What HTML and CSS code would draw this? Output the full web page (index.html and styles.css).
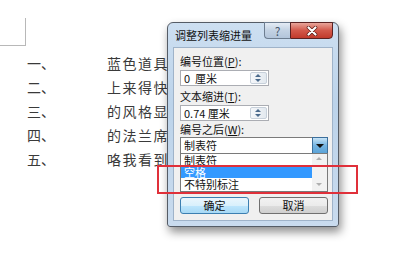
FILE: index.html
```html
<!DOCTYPE html>
<html lang="zh-CN">
<head>
    <meta charset="UTF-8">
    <title>调整列表缩进量</title>
    <link rel="stylesheet" href="styles.css">
</head>
<body>
    <div class="page">
        <div class="corner"></div>
        <div class="doc">
            <div class="row"><span class="num">一、</span><span class="txt">蓝色道具</span></div>
            <div class="row"><span class="num">二、</span><span class="txt">上来得快</span></div>
            <div class="row"><span class="num">三、</span><span class="txt">的风格显</span></div>
            <div class="row"><span class="num">四、</span><span class="txt">的法兰席</span></div>
            <div class="row"><span class="num">五、</span><span class="txt">咯我看到</span></div>
        </div>

        <div class="dialog">
            <div class="titlebar">
                <span class="title">调整列表缩进量</span>
                <div class="caption">
                    <span class="btn-help">?</span>
                    <span class="btn-close">
                        <svg width="14" height="10" viewBox="0 0 14 10">
                            <path d="M3.5 1.5 L10.5 8.5 M10.5 1.5 L3.5 8.5" stroke="#5a1a14" stroke-width="3.6" stroke-linecap="round"/>
                            <path d="M3.5 1.5 L10.5 8.5 M10.5 1.5 L3.5 8.5" stroke="#fff" stroke-width="2.2" stroke-linecap="round"/>
                        </svg>
                    </span>
                </div>
            </div>
            <div class="panel">
                <div class="label">编号位置(<u>P</u>):</div>
                <div class="spin">
                    <span class="val">0&nbsp; 厘米</span>
                    <span class="arrows"><i class="up"></i><i class="down"></i></span>
                </div>
                <div class="label">文本缩进(<u>T</u>):</div>
                <div class="spin">
                    <span class="val">0.74 厘米</span>
                    <span class="arrows"><i class="up"></i><i class="down"></i></span>
                </div>
                <div class="label">编号之后(<u>W</u>):</div>
                <div class="combo">
                    <span class="val">制表符</span>
                    <span class="drop"><i></i></span>
                    <div class="list">
                        <div class="item">制表符</div>
                        <div class="item sel">空格</div>
                        <div class="item">不特别标注</div>
                        <div class="scroll"><i class="up"></i><i class="down"></i></div>
                    </div>
                </div>
                <div class="buttons">
                    <span class="button default">确定</span>
                    <span class="button">取消</span>
                </div>
            </div>
        </div>

        <div class="highlight"></div>
    </div>
</body>
</html>
```

FILE: styles.css
```css
body {
    margin: 0;
    background: #fff;
    font-family: "Noto Sans CJK SC", "Noto Sans", sans-serif;
    color: #333;
}
.page {
    position: relative;
    width: 400px;
    height: 266px;
    overflow: hidden;
}
.corner {
    width: 25px;
    height: 27px;
    margin-top: 18px;
    border-right: 1px solid #b8b8b8;
    border-bottom: 1px solid #b8b8b8;
}
.doc {
    padding: 5px 0 0 27px;
}
.row {
    display: flex;
    height: 24px;
    line-height: 24px;
    font-size: 14px;
    color: #3a3a3a;
}
.num {
    width: 80px;
}
.txt {
    letter-spacing: 1.5px;
    white-space: nowrap;
}

/* dialog window */
.dialog {
    position: absolute;
    left: 167px;
    top: 22px;
    width: 172px;
    height: 205px;
    box-sizing: border-box;
    background: linear-gradient(#cddff1, #bcd3ea 40%, #c9dbee);
    border: 1px solid #555c66;
    border-radius: 6px 6px 3px 3px;
    box-shadow: 2px 5px 10px rgba(0,0,0,0.45);
    font-size: 11px;
    color: #111;
}
.titlebar {
    position: relative;
    height: 24px;
}
.title {
    position: absolute;
    left: 7px;
    top: 6px;
    line-height: 13px;
}
.caption {
    position: absolute;
    right: 5px;
    top: -1px;
    display: flex;
}
.btn-help {
    width: 26px;
    height: 17px;
    box-sizing: border-box;
    border: 1px solid #6d7d90;
    border-right: none;
    border-radius: 0 0 0 4px;
    background: linear-gradient(#e4ecf5, #c3d2e3 50%, #b3c5da);
    color: #45566b;
    font-size: 12px;
    line-height: 15px;
    text-align: center;
}
.btn-close {
    width: 43px;
    height: 17px;
    box-sizing: border-box;
    border: 1px solid #5b2222;
    border-radius: 0 0 4px 0;
    background: linear-gradient(#e8a59a, #d2584a 50%, #c13a2c);
    display: flex;
    align-items: center;
    justify-content: center;
}
.panel {
    position: absolute;
    left: 5px;
    right: 5px;
    top: 24px;
    bottom: 5px;
    background: #f0f0f0;
    border: 1px solid #9fb3c9;
    padding: 5px 0 0 6px;
}
.label {
    height: 16px;
    line-height: 16px;
}
.label u {
    text-decoration: underline;
}
.spin {
    display: flex;
    justify-content: space-between;
    width: 89px;
    height: 16px;
    box-sizing: border-box;
    border: 1px solid #abadb3;
    background: #fff;
    margin: 1px 0 2px 0;
}
.spin + .label + .spin {
    margin-bottom: 0;
}
.val {
    padding-left: 3px;
    line-height: 14px;
}
.arrows {
    width: 15px;
    display: flex;
    flex-direction: column;
    border: 1px solid #c7d0da;
    margin: 1px;
    border-radius: 2px;
    background: linear-gradient(90deg, #f5f7fa, #e3e9ef);
}
.arrows i, .scroll i {
    flex: 1;
    position: relative;
}
.arrows i::after, .scroll i::after {
    content: "";
    position: absolute;
    left: 4px;
    top: 1px;
    border-left: 3px solid transparent;
    border-right: 3px solid transparent;
}
.arrows .up::after {
    border-bottom: 3px solid #4b6a8c;
}
.arrows .down::after {
    top: 1px;
    border-top: 3px solid #4b6a8c;
}
.combo {
    position: relative;
    display: flex;
    justify-content: space-between;
    width: 148px;
    height: 17px;
    box-sizing: border-box;
    border: 1px solid #7a7a7a;
    background: #fff;
}
.combo .val {
    line-height: 15px;
}
.drop {
    width: 16px;
    margin: -1px -1px 0 0;
    height: 17px;
    box-sizing: border-box;
    border: 1px solid #3c6f9c;
    background: linear-gradient(#c8e4f7, #74b4e2 50%, #5ca4d8);
    position: relative;
}
.drop i {
    position: absolute;
    left: 3px;
    top: 6px;
    border-left: 4px solid transparent;
    border-right: 4px solid transparent;
    border-top: 4px solid #111;
}
.list {
    position: absolute;
    left: -1px;
    top: 15px;
    width: 148px;
    height: 39px;
    box-sizing: border-box;
    border: 1px solid #7a7a7a;
    background: #fff;
    padding: 0 15px 0 0;
}
.item {
    height: 12px;
    line-height: 12px;
    padding-left: 3px;
    font-size: 11px;
}
.item.sel {
    background: #3399ff;
    color: #fff;
}
.scroll {
    position: absolute;
    right: 0;
    top: 0;
    bottom: 0;
    width: 15px;
    display: flex;
    flex-direction: column;
    justify-content: space-between;
    background: #f2f2f2;
}
.scroll i {
    flex: none;
    height: 9px;
}
.scroll .up::after {
    top: 3px;
    border-bottom: 3px solid #b0b0b0;
}
.scroll .down::after {
    border-top: 3px solid #b0b0b0;
}
.buttons {
    display: flex;
    gap: 10px;
    margin: 43px 0 0 0;
}
.button {
    width: 69px;
    height: 17px;
    box-sizing: border-box;
    border: 1px solid #707070;
    border-radius: 3px;
    background: linear-gradient(#f2f2f2, #ebebeb 50%, #dddddd 51%, #cfcfcf);
    text-align: center;
    line-height: 15px;
}
.button.default {
    border-color: #3c7fb1;
    background: linear-gradient(#eaf6fd, #d9f0fc 50%, #bee6fd 51%, #a7d9f5);
}

.highlight {
    position: absolute;
    left: 157px;
    top: 165px;
    width: 201px;
    height: 29px;
    box-sizing: border-box;
    border: 2px solid #e0303a;
}
```
